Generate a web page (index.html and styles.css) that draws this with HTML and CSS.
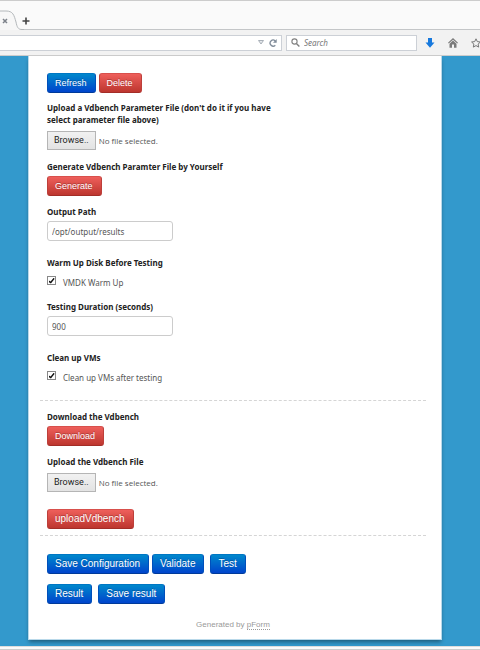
FILE: index.html
```html
<!DOCTYPE html>
<html lang="en">
<head>
  <meta charset="UTF-8" />
  <meta name="viewport" content="width=device-width, initial-scale=1.0"/>
  <title>Vdbench Configuration</title>
  <link rel="stylesheet" href="styles.css">
</head>
<body>

<header class="browser">
  <div class="tab-strip">
    <div class="tab">
      <svg class="tab-edge" viewBox="0 0 24 20" width="24" height="20">
        <path d="M0 1h6c7 0 8 4 10 11 1 5 2 7.500 6 7.500h2V20H0z" fill="#f7f7f7"/>
        <path d="M0 1h6c7 0 8 4 10 11 1 5 2 7.500 6 7.500h2" fill="none" stroke="#b4b8bb"/>
      </svg>
      <button class="icon-btn tab-close" aria-label="Close tab">
        <svg viewBox="0 0 6 6" width="6" height="6"><path d="M1 1l4 4M5 1l-4 4" stroke="#7d828a" stroke-width="1.500"/></svg>
      </button>
    </div>
    <button class="icon-btn" aria-label="New tab">
      <svg viewBox="0 0 8 8" width="8" height="8"><path d="M4 .5v7M.5 4h7" stroke="#444" stroke-width="1.600"/></svg>
    </button>
  </div>
  <div class="toolbar">
    <div class="address">
      <input type="text" class="address-input" aria-label="Address" />
      <svg viewBox="0 0 6 5" width="6" height="5"><path d="M.5.5h5L3 4z" fill="#e6e9ec" stroke="#a9b0b8"/></svg>
      <button class="icon-btn" aria-label="Reload">
        <svg viewBox="0 0 8 8" width="8" height="8">
          <path d="M6.300 6.200A3 3 0 1 1 6.200 1.900" fill="none" stroke="#7f8b99" stroke-width="1.300"/>
          <path d="M7.700 0v3.800H4z" fill="#7f8b99"/>
        </svg>
      </button>
    </div>
    <div class="search">
      <svg viewBox="0 0 9 9" width="9" height="9">
        <circle cx="3.500" cy="3.500" r="2.600" fill="none" stroke="#808080" stroke-width="1.100"/>
        <path d="M5.400 5.400l3 3" stroke="#808080" stroke-width="1.400"/>
      </svg>
      <input type="search" class="search-input" placeholder="Search" aria-label="Search" />
    </div>
    <div class="tools">
      <button class="icon-btn" aria-label="Downloads">
        <svg viewBox="0 0 10 10" width="10" height="10"><path d="M3 0h4v4.500h2.500L5 9.800.5 4.500H3z" fill="#1779dd"/></svg>
      </button>
      <button class="icon-btn" aria-label="Home">
        <svg viewBox="0 0 10 10" width="10" height="10">
          <path d="M5 0l5 4.800-.8.8L5 1.800.8 5.600 0 4.800z" fill="#7b7b7b"/>
          <path d="M5 2.600l3.500 3.200V9.800H6V6.500H4v3.300H1.500v-4z" fill="#7b7b7b"/>
        </svg>
      </button>
      <button class="icon-btn" aria-label="Bookmarks">
        <svg viewBox="0 0 10 10" width="10" height="10"><path d="M5 .8l1.300 2.800 3.100.4-2.300 2.100.6 3L5 7.600 2.300 9.100l.6-3L.6 4l3.100-.4z" fill="none" stroke="#777"/></svg>
      </button>
    </div>
  </div>
</header>

<main>
  <form class="card">
    <section class="group">
      <div class="actions">
        <button type="button" class="btn blue">Refresh</button>
        <button type="button" class="btn red">Delete</button>
      </div>

      <div class="field">
        <label class="title narrow" for="paramFile">Upload a Vdbench Parameter File (don't do it if you have select parameter file above)</label>
        <div class="file">
          <input type="file" id="paramFile" />
          <span class="browse">Browse..</span>
          <span>No file selected.</span>
        </div>
      </div>

      <div class="field">
        <h2 class="title">Generate Vdbench Paramter File by Yourself</h2>
        <button type="button" class="btn red">Generate</button>
      </div>

      <div class="field">
        <label class="title" for="outputPath">Output Path</label>
        <input type="text" class="text" id="outputPath" value="/opt/output/results" />
      </div>

      <div class="field after-text">
        <h2 class="title">Warm Up Disk Before Testing</h2>
        <div class="check">
          <input type="checkbox" id="warmUp" checked />
          <label for="warmUp">VMDK Warm Up</label>
        </div>
      </div>

      <div class="field">
        <label class="title" for="duration">Testing Duration (seconds)</label>
        <input type="text" class="text" id="duration" value="900" />
      </div>

      <div class="field after-text">
        <h2 class="title">Clean up VMs</h2>
        <div class="check">
          <input type="checkbox" id="cleanUp" checked />
          <label for="cleanUp">Clean up VMs after testing</label>
        </div>
      </div>
    </section>

    <section class="group">
      <div class="field">
        <h2 class="title">Download the Vdbench</h2>
        <button type="button" class="btn red">Download</button>
      </div>

      <div class="field">
        <label class="title" for="vdbenchFile">Upload the Vdbench File</label>
        <div class="file">
          <input type="file" id="vdbenchFile" />
          <span class="browse">Browse..</span>
          <span>No file selected.</span>
        </div>
      </div>

      <button type="button" class="btn large red upload">uploadVdbench</button>
    </section>

    <section class="group submit">
      <div class="actions">
        <button type="button" class="btn large blue">Save Configuration</button>
        <button type="button" class="btn large blue">Validate</button>
        <button type="button" class="btn large blue spaced">Test</button>
      </div>
      <div class="actions">
        <button type="button" class="btn large blue">Result</button>
        <button type="button" class="btn large blue spaced">Save result</button>
      </div>
    </section>

    <p class="credit">Generated by <a href="#">pForm</a></p>
  </form>
</main>

<footer class="window-edge"></footer>

</body>
</html>
```
FILE: styles.css
```css
* {
  box-sizing: border-box;
}
body {
  margin: 0;
  min-height: 100vh;
  display: flex;
  flex-direction: column;
  background: #3399cc;
  font-family: "Noto Sans", Tahoma, sans-serif;
  font-size: 8px;
  color: #555;
}
svg {
  display: block;
}
button, input {
  font-family: inherit;
  margin: 0;
}

/* Browser bar */
.browser {
  border-top: 1px solid #ccc;
  border-bottom: 1px solid #ccc;
  background: #f2f2f2;
}
.tab-strip {
  display: flex;
  align-items: flex-end;
  height: 29px;
  background: #fafafa;
  border-bottom: 1px solid #c4c6c8;
}
.tab {
  position: relative;
  margin-bottom: -1px;
}
.icon-btn {
  padding: 0;
  border: none;
  background: none;
  cursor: pointer;
}
.tab-strip > .icon-btn {
  margin: 0 0 4px -2px;
}
.tab-close {
  position: absolute;
  left: 2px;
  top: 8px;
}
.toolbar {
  display: flex;
  align-items: center;
  gap: 4px;
  height: 25px;
  overflow: hidden;
}
.address, .search {
  display: flex;
  align-items: center;
  gap: 5px;
  height: 16px;
  padding: 0 4px;
  background: #fff;
  border: 1px solid #ccd0d6;
}
.address {
  flex: 1;
  min-width: 0;
  border-left: none;
}
.search {
  flex: none;
  width: 131px;
  gap: 4px;
}
.tools {
  display: flex;
  flex: none;
  gap: 13px;
  width: 59px;
  padding-left: 4px;
}
.address-input, .search-input {
  flex: 1;
  min-width: 0;
  padding: 0;
  border: none;
  outline: none;
  background: none;
  font-size: 8px;
}
.search-input::placeholder {
  color: #777;
  font-style: italic;
}

/* Form card */
main {
  flex: 1;
  padding: 0 38px 6px 28px;
}
.card {
  padding: 17px 15px 8px 11px;
  background: #fff;
  border: 1px solid #b9d9ea;
  border-top: none;
  box-shadow: 0 3px 4px -1px rgba(0,0,0,0.4);
}
.group {
  padding: 0 7px 14px;
  border-bottom: 1px dashed #d5d5d5;
}
.group + .group {
  padding-top: 10px;
  padding-bottom: 6px;
}
.group.submit {
  padding-top: 18px;
  padding-bottom: 0;
  border-bottom: none;
}
.actions {
  display: flex;
  gap: 3px;
}
.submit .actions + .actions {
  margin-top: 10px;
}
.actions .spaced {
  margin-left: 3px;
}
.actions + .field {
  margin-top: 9px;
}
.field + .field {
  margin-top: 10px;
}
.field + .after-text {
  margin-top: 16px;
}
.title {
  display: block;
  margin: 0 0 3px;
  font-size: 8px;
  font-weight: bold;
  line-height: 12px;
  color: #222;
}
.narrow {
  max-width: 240px;
}
.btn {
  display: block;
  height: 20px;
  padding: 0 8px 0 7px;
  border: 1px solid;
  border-radius: 3px;
  font-family: "Liberation Sans", Arial, sans-serif;
  font-size: 9px;
  line-height: 18px;
  color: #fff;
  text-shadow: 0 -1px 0 rgba(0,0,0,0.25);
  cursor: pointer;
}
.large {
  font-size: 10px;
}
.blue {
  background: linear-gradient(#0088cc, #0044cc);
  border-color: #0077c4 #0050bb #003a99;
}
.red {
  background: linear-gradient(#ee5f5b, #bd362f);
  border-color: #d8504c #bd3f3a #a32d27;
}
.upload {
  margin-top: 16px;
}
.file {
  position: relative;
  display: flex;
  align-items: center;
  gap: 3px;
  margin-top: 5px;
  padding-bottom: 1px;
  width: max-content;
  font-family: "Open Sans", Arial, sans-serif;
}
.file input {
  position: absolute;
  inset: 0;
  width: 100%;
  opacity: 0;
}
.browse {
  height: 19px;
  padding: 0 6px;
  border: 1px solid #b5b5b5;
  background: linear-gradient(#f1f1f1, #e3e3e3);
  font-family: Roboto, Arial, sans-serif;
  font-size: 9px;
  line-height: 17px;
  color: #222;
}
.text {
  display: block;
  width: 126px;
  height: 20px;
  padding: 0 4px;
  border: 1px solid #ccc;
  border-radius: 3px;
  font-size: 8px;
  color: #555;
}
.check {
  display: flex;
  gap: 7px;
  height: 19px;
  padding-top: 4px;
}
.check input {
  appearance: none;
  display: grid;
  place-content: center;
  width: 9px;
  height: 9px;
  border: 1px solid #888;
  background: #fff;
}
.check input:checked::before {
  content: "";
  width: 6px;
  height: 6px;
  background: #111;
  clip-path: polygon(0 45%, 35% 65%, 90% 0, 100% 25%, 40% 100%, 0 75%);
}
.check label {
  padding-top: 1px;
  line-height: 12px;
}
.credit {
  margin: 15px 0 0;
  line-height: 12px;
  font-family: "Liberation Sans", Arial, sans-serif;
  text-align: center;
  color: #999;
}
.credit a {
  color: #999;
  text-decoration: none;
  border-bottom: 1px dotted #999;
}

.window-edge {
  height: 5px;
  background: #fafafa;
  border-top: 1px solid #ddd;
  border-bottom: 2px solid #ccc;
}
```
